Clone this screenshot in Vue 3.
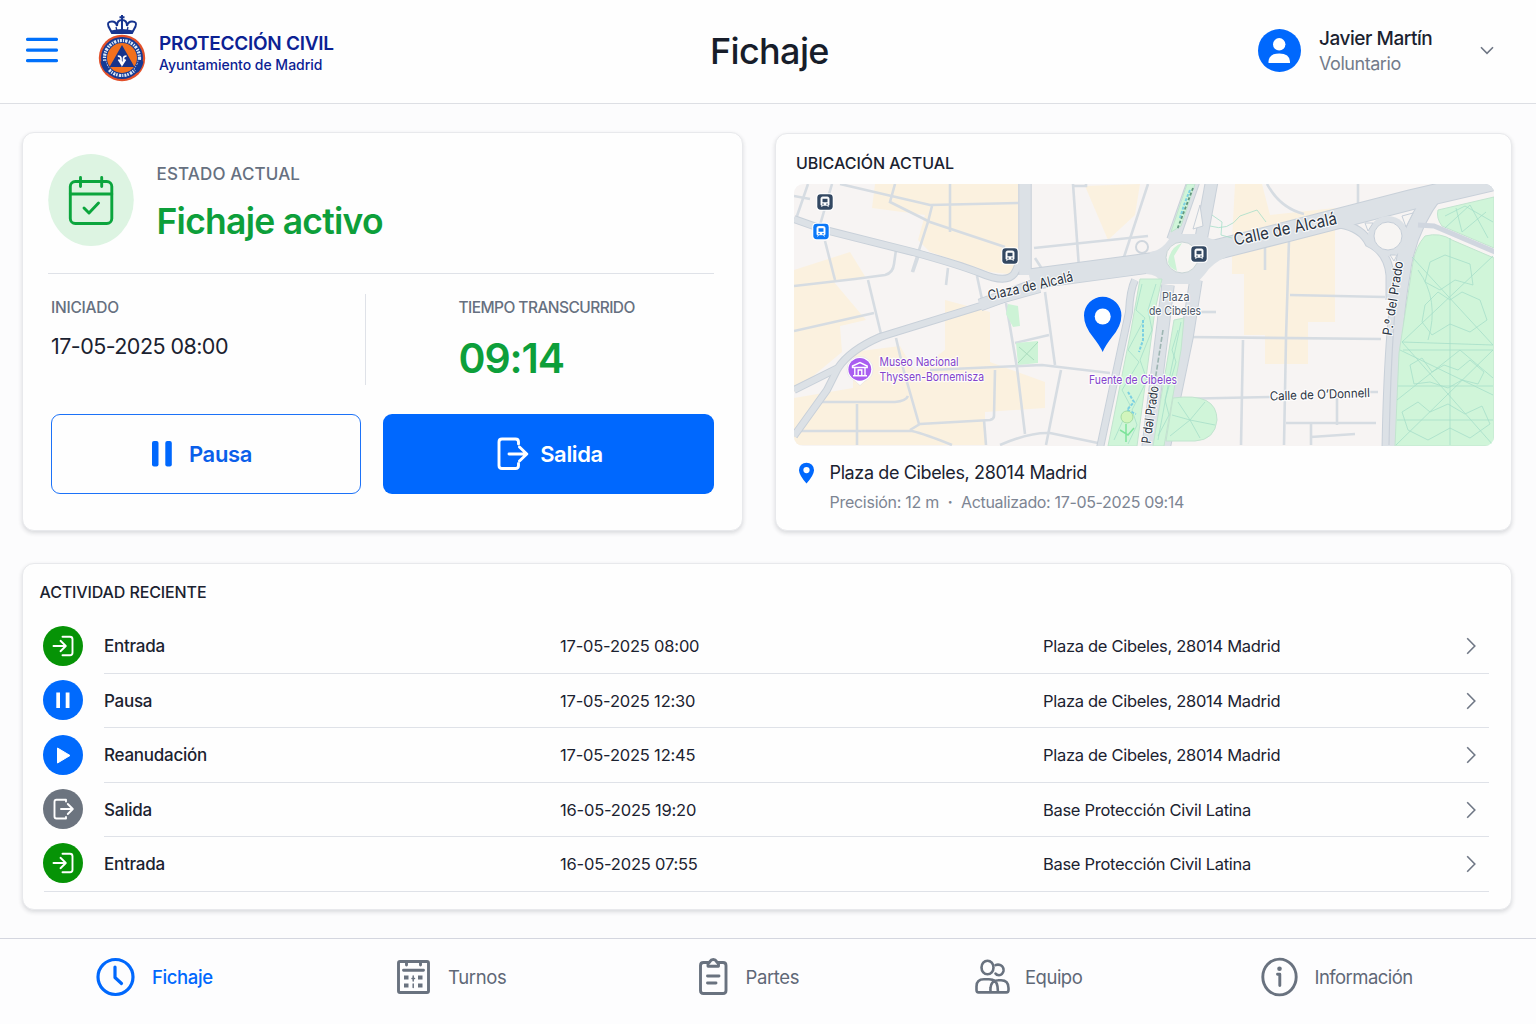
<script setup>
const activity = [
  { type: 'in', label: 'Entrada', time: '17-05-2025 08:00', place: 'Plaza de Cibeles, 28014 Madrid' },
  { type: 'hold', label: 'Pausa', time: '17-05-2025 12:30', place: 'Plaza de Cibeles, 28014 Madrid' },
  { type: 'play', label: 'Reanudación', time: '17-05-2025 12:45', place: 'Plaza de Cibeles, 28014 Madrid' },
  { type: 'out', label: 'Salida', time: '16-05-2025 19:20', place: 'Base Protección Civil Latina' },
  { type: 'in', label: 'Entrada', time: '16-05-2025 07:55', place: 'Base Protección Civil Latina' },
]

// Street geometry, in the map's own coordinate system
const beige = [
  'M875 184H1018V275L990 272L930 252L918 240L925 215L872 208Z',
  'M794 270L850 252L866 278L834 282L866 320L840 326L842 352L794 392Z',
  'M794 398L853 388V352L900 346L915 372L945 350V300L990 312V362L1045 382V408L985 412V445H794Z',
  'M1235 184H1262L1270 215L1335 208V322H1308V364H1265V335H1244V274H1232V240Z',
  'M1085 186L1140 184L1135 215L1108 240Z',
]
const minor = [
  'M840 184L930 205L1018 203', 'M895 184L890 202L930 222L1005 247', 'M950 184V232', 'M932 206L928 222L912 272',
  'M920 252L913 272', 'M808 184L797 216', 'M832 184L820 225', 'M794 196L810 199', 'M825 241L835 280',
  'M794 286L855 279L885 275Q893 273 894 264L896 250', 'M868 280L881 334', 'M794 331L874 313', 'M948 268L946 285',
  'M977 276L983 304', 'M896 338L903 368L919 424', 'M822 402L895 402Q906 401 908 396', 'M857 404V445',
  'M794 431H912Q925 434 952 445M910 430L920 424L990 420Q994 419 994 416L995 370', 'M984 420L986 445',
  'M930 370L1042 365L1110 373', 'M1006 303L1017 368L1025 434', 'M1015 343L1049 335', 'M1045 292L1055 365',
  'M1061 370L1046 445', 'M1000 445Q1030 432 1050 433L1098 443', 'M1073 184L1079 268', 'M1086 184V186H1074',
  'M1148 184L1123 260', 'M1034 248L1148 236', 'M1035 258L1044 272', 'M1267 184Q1280 208 1304 214', 'M1289 240L1286 338L1284 445',
  'M1265 246V270', 'M1290 295L1385 297', 'M1186 337L1381 339', 'M1243 340L1241 445', 'M1173 399L1270 397', 'M1362 392H1378',
  'M1286 423H1376', 'M1337 398V425', 'M1311 424V445M1311 437L1355 434', 'M1200 312H1216', 'M1358 184V206',
]
const mid = [
  'M794 219L825 230L913 252Q960 265 980 273Q1006 284 1014 274Q1020 265 1020 250',
  'M794 390L838 368Q850 350 880 337L1000 300L1040 289', 'M838 368L827 390L794 436',
  'M1135 280Q1130 290 1129 312L1100 448',
]
const wide = [
  'M1025 180V275', 'M1168 285L1148 448', 'M1196 280L1187 337L1164 448', 'M1194 180L1173 240', 'M1212 180L1200 245',
]
const parkPaths = [
  'M1412 257L1493 345', 'M1493 256L1402 342L1493 345', 'M1402 342L1493 445', 'M1493 350L1396 445', 'M1450 238V445',
  'M1403 350H1493', 'M1398 386H1493', 'M1400 350L1493 395', 'M1397 400L1460 350L1493 378', 'M1397 420H1493', 'M1418 270Q1440 300 1428 340',
  'M1430 262L1445 255L1470 264L1473 285L1455 280L1440 290L1425 282Z', 'M1425 305L1438 292L1450 300L1462 292L1480 300L1487 320L1470 332L1450 324L1432 335L1422 322Z',
  'M1410 365L1422 358L1432 372L1444 365L1458 370L1470 360L1484 372L1478 384L1462 380L1448 388L1430 382L1414 384Z',
  'M1402 412L1418 402L1430 412L1448 404L1465 414L1482 406L1490 424L1470 438L1450 428L1428 440L1408 430Z',
  'M1445 216L1465 206L1493 222M1445 228L1470 205L1488 238M1456 208L1462 232L1486 212',
]
const stations = [
  { x: 825, y: 202, fill: '#334862' }, { x: 821, y: 231.5, fill: '#0b78f8' },
  { x: 1010, y: 256, fill: '#334862' }, { x: 1199, y: 254, fill: '#334862' },
]
</script>

<template>
  <div class="app">
    <header class="topbar">
      <svg class="menu" viewBox="0 0 32 26"><path d="M1.6 2.4H30.4M1.6 13.2H30.4M1.6 23.7H30.4" /></svg>
      <svg class="crest" viewBox="0 0 48 68">
        <g fill="none" stroke="#17348f" stroke-width="2">
          <path d="M14 18L10.500 11.500Q8.500 6.500 14 6.500Q18 6.500 19 11Q19 5 24 5Q29 5 29 11Q30 6.500 34 6.500Q39.500 6.500 37.500 11.500L34 18Z" />
          <path d="M24 0V17M21.500 2.200H26.500" />
          <path d="M18 12L19 16M30 12L29 16" stroke-width="1.300" />
          <path d="M13.500 17Q24 14 34.500 17" stroke-width="3" />
        </g>
        <circle cx="24" cy="43" r="23.200" fill="#e2502a" />
        <circle cx="24" cy="43" r="21" fill="#143a94" />
        <circle cx="24" cy="43" r="17.500" fill="none" stroke="#dce8f6" stroke-width="3.200" stroke-dasharray="2 1.100 1.200 1 2.400 1.300 1.500 .9" />
        <path d="M5 46A19 19 0 0 0 10 56M43 46A19 19 0 0 1 38 56" fill="none" stroke="#143a94" stroke-width="5" />
        <circle cx="24" cy="43" r="15" fill="#f2701d" />
        <path d="M24 30L36.500 52H11.500Z" fill="#16338a" />
        <path d="M19.800 41Q23 41 23 43.500V46L24 49.500L25.500 46V43.500Q25.500 41 28.500 41M20.500 44.500L24 50L27.500 44.500" fill="none" stroke="#fff" stroke-width="1.700" />
      </svg>
      <div class="brand">
        <strong>PROTECCIÓN CIVIL</strong>
        <span>Ayuntamiento de Madrid</span>
      </div>
      <h1>Fichaje</h1>
      <div class="user">
        <svg class="avatar" viewBox="0 0 43 43">
          <ellipse cx="21.500" cy="21.500" rx="21.500" ry="21.500" fill="#0068fd" />
          <circle cx="21.200" cy="15.300" r="6.200" fill="#fff" />
          <path d="M10.500 34V32.500Q11 24.500 21.300 24.500Q31.500 24.500 32 32.500V34Z" fill="#fff" />
        </svg>
        <div class="who"><b>Javier Martín</b><span>Voluntario</span></div>
        <svg class="down" viewBox="0 0 14 9"><path d="M1 1.200L7 7.400L13 1.200" /></svg>
      </div>
    </header>

    <main>
      <div class="top">
        <section class="card status">
          <div class="state">
            <svg class="badge" viewBox="0 0 86 92">
              <ellipse cx="43" cy="46" rx="42.800" ry="46" fill="#ddf4e2" />
              <g fill="none" stroke="#0ba53d" stroke-width="2.900" stroke-linecap="round" stroke-linejoin="round">
                <rect x="22.300" y="27.500" width="41.500" height="42" rx="5" />
                <path d="M22.300 40H63.800M32.500 23.500V32.500M53.700 23.500V32.500M36 54L41 59L50.500 49" />
              </g>
            </svg>
            <div class="statetext"><span>ESTADO ACTUAL</span><strong>Fichaje activo</strong></div>
          </div>
          <div class="times">
            <div class="started"><span>INICIADO</span><p>17-05-2025 08:00</p></div>
            <div class="elapsed"><span>TIEMPO TRANSCURRIDO</span><strong>09:14</strong></div>
          </div>
          <div class="actions">
            <button class="pause">
              <svg width="20" height="26" viewBox="0 0 20 26"><rect width="6.500" height="25.500" rx="2" fill="#0068fd" /><rect x="13.300" width="6.500" height="25.500" rx="2" fill="#0068fd" /></svg>
              <span>Pausa</span>
            </button>
            <button class="exit">
              <svg width="32" height="34" viewBox="0 0 32 34" fill="none" stroke="#fff" stroke-width="2.900" stroke-linecap="round" stroke-linejoin="round">
                <path d="M21.500 7V5Q21.500 2 18.500 2H5Q2 2 2 5V28.500Q2 31.500 5 31.500H18.500Q21.500 31.500 21.500 28.500V26.500M12 17H29.500M22.500 10L29.800 17L22.500 24" />
              </svg>
              <span>Salida</span>
            </button>
          </div>
        </section>

        <section class="card location">
          <h2>UBICACIÓN ACTUAL</h2>
          <svg class="map" viewBox="794 184 700 262">
            <rect x="794" y="184" width="700" height="262" fill="#f7f4f3" />
            <path v-for="d in beige" :key="d" :d="d" fill="#fbf1df" />
            <g fill="none" stroke="#d6dce2" stroke-width="2.600"><path v-for="d in minor" :key="d" :d="d" /></g>
            <path d="M1008 304L1018 306L1020 326L1013 327L1006 314ZM1016 343L1038 341L1038 363L1018 365Z" fill="#cdf3d6" />
            <path d="M1018 363L1038 342M1019 347L1034 360" fill="none" stroke="#aadcbe" />
            <circle cx="1142" cy="247" r="6" fill="#f7f4f3" stroke="#cfd6dd" stroke-width="2" />

            <g fill="none" stroke="#c8d0d9">
              <g stroke-width="8"><path v-for="d in mid" :key="d" :d="d" /></g>
              <g stroke-width="13.500"><path v-for="d in wide" :key="d" :d="d" /></g>
              <path d="M980 305L1040 283L1085 272L1150 264" stroke-width="13" />
              <path d="M1030 279L1150 263L1215 250L1290 231L1410 200L1500 179" stroke-width="21" />
              <path d="M1436 192Q1407 230 1402 275Q1392 330 1390 450" stroke-width="17" />
              <path d="M1340 224Q1362 228 1369 243Q1388 252 1390 275V300" stroke-width="9" />
            </g>
            <g fill="none" stroke="#dce1e6">
              <g stroke-width="6"><path v-for="d in mid" :key="d" :d="d" /></g>
              <g stroke-width="11.500"><path v-for="d in wide" :key="d" :d="d" /></g>
              <path d="M980 305L1040 283L1085 272L1150 264" stroke-width="11" />
              <path d="M1030 279L1150 263L1215 250L1290 231L1410 200L1500 179" stroke-width="19" />
              <path d="M1436 192Q1407 230 1402 275Q1392 330 1390 450" stroke-width="15" />
              <path d="M1340 224Q1362 228 1369 243Q1388 252 1390 275V300" stroke-width="7" />
            </g>
            <path d="M1396 300Q1391 350 1389 445" fill="none" stroke="#c9d0d9" stroke-width="1.200" />
            <path d="M1150 252Q1164 250 1172 234H1204Q1207 240 1226 241L1228 256Q1212 263 1205 274L1196 284H1162Q1158 274 1146 274Z" fill="#dce1e6" />
            <ellipse cx="1182" cy="257.500" rx="16" ry="15.500" fill="#f7f5f3" stroke="#c8d4d6" />
            <path d="M1168 262Q1170 247 1182 243L1174 256L1177 271Q1169 268 1168 262Z" fill="#cdf3d6" />
            <path d="M1200 205L1203 226L1193 229Z" fill="#f7f5f3" stroke="#c8d0d9" />
            <circle cx="1388" cy="236" r="20" fill="#dce1e6" />
            <circle cx="1388" cy="236" r="14" fill="#f7f5f3" stroke="#c5ced8" />
            <path d="M1365 223L1373 223L1368 231ZM1402 216L1413 213L1406 227ZM1390 255H1397L1394 261Z" fill="#f7f5f3" stroke="#c5ced8" />

            <!-- Parks and green strips -->
            <g fill="#d0f5d9" stroke="#c2e4cf">
              <path d="M1425 236Q1440 232 1452 240L1494 258V446H1395L1399 353L1413 262Q1416 246 1425 236Z" />
              <path d="M1438 210L1494 197V248L1442 226Q1436 218 1438 210Z" />
              <path d="M1140 279H1162L1155 310L1137 446H1108L1131 330Z" />
              <path d="M1174 320L1184 318L1181 350L1164 446H1153Z" />
              <path d="M1173 398Q1217 392 1217 420Q1215 440 1195 441H1166Z" />
              <path d="M1187 184H1195L1181 226L1171 232Z" />
            </g>
            <path d="M1418 225L1434 226L1500 254" fill="none" stroke="#d0d6df" stroke-width="5" />
            <g fill="none" stroke="#a6dec9" stroke-width="0.800">
              <path v-for="d in parkPaths" :key="d" :d="d" />
              <path d="M1142 284L1136 310L1145 318L1128 350L1139 362L1122 390L1130 405L1114 440M1156 284L1148 310L1152 330L1140 360L1147 380L1132 410L1137 425L1128 444" />
              <path d="M1190 420L1178 402M1190 420L1205 402M1190 420L1215 425M1190 420L1200 438M1190 420L1170 436M1190 420L1172 415" />
              <path d="M1181 322L1170 375L1158 440M1178 330L1172 350L1176 362L1165 400L1169 415L1158 436" />
              <path d="M1212 215L1222 222L1221 235L1232 238M1210 226Q1228 232 1240 216L1257 210L1266 222" />
            </g>
            <path d="M1143 320V340L1139 352M1128 392L1134 402L1127 410L1136 414M1190 190L1184 205L1180 218" fill="none" stroke="#7bd0e2" stroke-width="2" stroke-dasharray="3 1.500" />
            <path d="M1193 188L1177 230" fill="none" stroke="#62977f" stroke-width="1.800" stroke-dasharray="3 2" />
            <path d="M1163 330L1152 400" fill="none" stroke="#9db5b2" stroke-width="1.600" stroke-dasharray="5 2" />
            <circle cx="1127" cy="417" r="6" fill="#d2f5bc" stroke="#a4dda4" />
            <path d="M1120 430L1128 435L1134 428M1126 424V442" fill="none" stroke="#7ee39b" stroke-width="1.500" />

            <!-- Transport stops -->
            <g v-for="s in stations" :key="s.x" :transform="`translate(${s.x} ${s.y})`">
              <rect x="-8.700" y="-8.700" width="17.400" height="17.400" rx="4" fill="#fff" />
              <rect x="-7.700" y="-7.700" width="15.400" height="15.400" rx="3.400" :fill="s.fill" />
              <path d="M-4 3.200V-3.500Q-4 -5 -2.500 -5H2.500Q4 -5 4 -3.500V3.200ZM-3.500 5L-2.500 3.500M3.500 5L2.500 3.500" fill="#fff" stroke="#fff" stroke-width="0.900" />
              <path d="M-2.500 -3.300H2.500V0.300H-2.500ZM-2.700 1.600H-1.300V2.800H-2.700ZM1.300 1.600H2.700V2.800H1.300Z" :fill="s.fill" />
            </g>

            <!-- Museum marker -->
            <path d="M860 385.500L855 381Q847 377 847 369.500A13 13 0 0 1 873 369.500Q873 377 865 381Z" fill="#fff" stroke="#ddd" stroke-width="0.500" />
            <circle cx="859.800" cy="369.300" r="11.400" fill="#a95df0" />
            <path d="M852.500 367.500V366L860 362.500L867.200 366V367.500ZM854.800 368V375.500M865 368V375.500M853 375.700H867M858.200 375V370H861.800V375" fill="none" stroke="#fff" stroke-width="1.400" />

            <path d="M1102.700 352Q1100 346 1093 337Q1084 326 1084 315.500A18.700 18.700 0 0 1 1121.400 315.500Q1121.400 326 1112 337Q1105 346 1102.700 352Z" fill="#0062fb" />
            <circle cx="1102.700" cy="316.500" r="8" fill="#fff" />

            <g class="labels">
              <text x="989" y="300.500" font-size="14" textLength="87" lengthAdjust="spacingAndGlyphs" transform="rotate(-13 989 300)">Claza de Alcalá</text>
              <text x="1235" y="245.500" font-size="17" textLength="105" lengthAdjust="spacingAndGlyphs" transform="rotate(-12 1235 245)">Calle de Alcalá</text>
              <text x="1162" y="301" font-size="12" textLength="27.500" lengthAdjust="spacingAndGlyphs" class="soft">Plaza</text>
              <text x="1149" y="315" font-size="12" textLength="52" lengthAdjust="spacingAndGlyphs" class="soft">de Cibeles</text>
              <text x="1270" y="400.500" font-size="12.500" textLength="100" lengthAdjust="spacingAndGlyphs" transform="rotate(-2 1270 401)">Calle de O’Donnell</text>
              <text x="1391.500" y="336" font-size="13" textLength="75" lengthAdjust="spacingAndGlyphs" transform="rotate(-81 1391.500 336)">P.º del Prado</text>
              <text x="1150.500" y="444" font-size="13" textLength="58" lengthAdjust="spacingAndGlyphs" transform="rotate(-82 1150.500 444)">P dəl Prado</text>
              <g class="poi">
                <text x="879.500" y="366" font-size="12" textLength="79" lengthAdjust="spacingAndGlyphs">Museo Nacional</text>
                <text x="879.500" y="380.500" font-size="12" textLength="104.500" lengthAdjust="spacingAndGlyphs">Thyssen-Bornemisza</text>
                <text x="1089" y="383.500" font-size="12" textLength="88" lengthAdjust="spacingAndGlyphs">Fuente de Cibeles</text>
              </g>
            </g>
          </svg>
          <div class="address">
            <svg viewBox="0 0 16 21"><path fill-rule="evenodd" d="M8 20.500Q1 12.500 0.800 7.800A7.200 7.200 0 0 1 15.200 7.800Q15 12.500 8 20.500ZM8 4.700A3 3 0 1 0 8 10.700A3 3 0 1 0 8 4.700Z" fill="#0068fd" /></svg>
            <div>
              <p>Plaza de Cibeles, 28014 Madrid</p>
              <div class="meta"><span class="prec">Precisión: 12 m</span><i>·</i><span>Actualizado: 17-05-2025 09:14</span></div>
            </div>
          </div>
        </section>
      </div>

      <section class="card recent">
        <h2>ACTIVIDAD RECIENTE</h2>
        <ul>
          <li v-for="(a, i) in activity" :key="i">
            <svg class="dot" :class="a.type" viewBox="0 0 40 40">
              <circle cx="20" cy="20" r="20" />
              <g v-if="a.type === 'in'" class="line"><path d="M19.500 10.800H27Q29.500 10.800 29.500 13.300V26.700Q29.500 29.200 27 29.200H19.500M10.500 20H22.500M17.500 14.800L22.800 20L17.500 25.200" /></g>
              <g v-else-if="a.type === 'out'" class="line"><path d="M23 12.500V10.800H13.500Q11.500 10.800 11.500 12.800V27.500Q11.500 29.500 13.500 29.500H23V28M18 20H29.500M24.800 15L29.800 20L24.800 25" /></g>
              <path v-else-if="a.type === 'hold'" d="M13.300 12.500H17V28H13.300ZM22.700 12.500H26.500V28H22.700Z" fill="#fff" />
              <path v-else d="M14.500 13V28L27 20.500Z" fill="#fff" stroke="#fff" stroke-linejoin="round" />
            </svg>
            <div class="row">
              <b>{{ a.label }}</b><time>{{ a.time }}</time><span>{{ a.place }}</span>
              <svg class="go" viewBox="0 0 10 18"><path d="M1.200 1.200L8.800 9L1.200 16.800" /></svg>
            </div>
          </li>
        </ul>
      </section>
    </main>

    <nav>
      <a class="on">
        <svg width="39" height="40" viewBox="0 0 39 40" stroke-width="3.200"><circle cx="19.500" cy="20" r="17.500" /><path d="M19 10V20.500L25.500 26.500" /></svg>
        <span>Fichaje</span>
      </a>
      <a>
        <svg width="33" height="34" viewBox="0 0 33 34" stroke-width="2.900">
          <rect x="1.500" y="1.500" width="30" height="31" rx="1.500" />
          <path d="M6.500 10.300H26.500M9.500 3V5M23.500 3V5" />
          <path d="M7 15.500H11.500V19.500H7ZM21 15.500H25.500V19.500H21ZM7 23.500H11.500V27.500H7ZM21 23.500H25.500V27.500H21Z" fill="#69727f" stroke="none" /><path d="M15 18.500H17.500M16.200 16V21M16.200 24V27.500" stroke-width="1.500" />
        </svg>
        <span>Turnos</span>
      </a>
      <a class="parts">
        <svg width="29" height="37" viewBox="0 0 29 37" stroke-width="2.900">
          <path d="M9 4.500H4.500Q1.500 4.500 1.500 7.500V32.500Q1.500 35.500 4.500 35.500H24Q27 35.500 27 32.500V7.500Q27 4.500 24 4.500H19.500" />
          <path d="M9 8.300V5.500Q10.500 4.500 11 3.500Q12 1.500 14.300 1.500Q16.500 1.500 17.500 3.500Q18 4.500 19.500 5.500V8.300ZM8.500 18H20M8.500 25H17" />
        </svg>
        <span>Partes</span>
      </a>
      <a class="team">
        <svg width="35" height="35" viewBox="0 0 35 35" stroke-width="2.600">
          <ellipse cx="12.500" cy="8.500" rx="6" ry="6.800" />
          <path d="M20.500 6.200Q23 5 25.500 6.200Q29 8 28.500 12Q27.500 16 24 16.200Q21.500 16.200 20.500 14.500M3.500 33.400Q1.500 33.400 1.500 31V27.500Q1.500 20.300 9 20.300H14Q21.500 20.300 22.500 27.500L23 33.400ZM23.500 21.300H26Q33.400 21.300 33.500 29V31Q33.500 33.400 31.500 33.400H17Q15 33.400 15.500 29Q16 22 22 21.500" />
        </svg>
        <span>Equipo</span>
      </a>
      <a class="info">
        <svg width="37" height="40" viewBox="0 0 37 40" stroke-width="2.900">
          <ellipse cx="18.500" cy="20" rx="16.700" ry="17.900" /><path d="M16.500 17.300H18.800V28.500" /><circle cx="18.500" cy="11.800" r="2.300" fill="#69727f" stroke="none" />
        </svg>
        <span>Información</span>
      </a>
    </nav>
  </div>
</template>

<style>
body { margin: 0; background: #fdfdfd; }
</style>

<style scoped>
* { box-sizing: border-box; margin: 0; padding: 0; }
.app { width: 1536px; height: 1024px; display: flex; flex-direction: column; overflow: hidden; font-family: Inter, "Liberation Sans", sans-serif; color: #1b2230; background: #fcfcfd; white-space: nowrap; }
svg { flex: none; display: block; }

.topbar { height: 104px; flex: none; display: grid; grid-template-columns: 72px 61px 552px 1fr auto; align-items: center; padding: 0 42px 3px 26px; background: #fefefe; border-bottom: 1px solid #dddfe4; }
.menu { width: 32px; height: 26px; fill: none; stroke: #0070fb; stroke-width: 3.3; stroke-linecap: round; }
.crest { width: 48px; height: 68px; margin-top: -2px; }
.brand { display: flex; flex-direction: column; color: #0b2193; padding-top: 8px; }
.brand strong { font-size: 19px; font-weight: 580; line-height: 22px; letter-spacing: -.25px; }
.brand span { font-size: 14px; font-weight: 470; line-height: 20px; letter-spacing: -.02px; }
h1 { font-size: 36px; font-weight: 550; letter-spacing: -.65px; line-height: 44px; padding-top: 2px; margin-left: -1px; color: #171d2a; }
.user { display: flex; align-items: center; }
.avatar { width: 43px; height: 43px; }
.who { display: flex; flex-direction: column; margin-left: 18px; width: 161px; padding-top: 3px; }
.who b { font-size: 19px; font-weight: 480; letter-spacing: -.45px; line-height: 24px; }
.who span { font-size: 18px; letter-spacing: -.45px; line-height: 25px; color: #737b8a; }
.down { width: 14px; height: 9px; fill: none; stroke: #6e7684; stroke-width: 1.6; }

main { flex: 1; padding: 28px 24px 0 22px; }
.top { display: flex; justify-content: space-between; align-items: flex-end; }
.card { background: #fefefe; border: 1px solid #e8e9ec; border-radius: 12px; box-shadow: 0 2px 4px rgba(30, 35, 50, .16); }
h2 { font-size: 16px; font-weight: 490; line-height: 20px; letter-spacing: -.03px; }

.status { width: 721px; height: 399px; padding: 21px 28px 0 25px; }
.state { display: flex; height: 120px; border-bottom: 1px solid #dfe2e8; }
.badge { width: 86px; height: 92px; }
.statetext { display: flex; flex-direction: column; margin-left: 22.5px; padding-top: 8px; }
.statetext span { font-size: 17px; font-weight: 460; letter-spacing: .15px; line-height: 24px; color: #667080; }
.statetext strong { font-size: 35.5px; font-weight: 560; letter-spacing: -.75px; line-height: 48px; margin-top: 12px; color: #0d9f3a; }
.times { display: flex; height: 91px; margin: 20px 0 0 3px; }
.times span { display: block; font-size: 15.5px; font-weight: 460; letter-spacing: -.25px; line-height: 20px; padding-top: 3.500px; height: 28px; color: #667080; }
.started { width: 315px; border-right: 1px solid #dfe2e8; }
.started p { font-size: 21.5px; letter-spacing: -.55px; line-height: 30px; margin-top: 9px; }
.elapsed { padding-left: 92.5px; }
.times .elapsed span { letter-spacing: -.56px; }
.elapsed strong { display: block; font-size: 41px; font-weight: 570; letter-spacing: -1.1px; line-height: 50px; margin-top: 10.5px; color: #0d9f3a; }
.actions { display: flex; gap: 22px; margin: 28.5px 0 0 3px; }
button { height: 80px; display: flex; align-items: center; justify-content: center; border-radius: 9px; font: 570 22px Inter, sans-serif; letter-spacing: -.35px; }
.pause { width: 310px; gap: 17px; padding-right: 8px; border: 1.5px solid #1c72f8; background: #fefefe; color: #0a5fea; }
.exit { width: 331px; gap: 11px; border: 0; background: #0068fe; color: #fff; padding-left: 3px; }

.location { width: 737px; height: 398px; padding: 19px 18px 0; }
.location h2 { margin-left: 2px; }
.map { width: 700px; height: 262px; margin-top: 11px; border-radius: 9px; }
.labels { font-family: Inter, sans-serif; font-weight: 430; fill: #2b3442; stroke: rgba(255, 255, 255, .85); stroke-width: 2.4px; stroke-linejoin: round; paint-order: stroke; }
.soft { fill: #4d5867; }
.poi { fill: #8343cb; }
.address { display: flex; margin: 14px 0 0 4px; }
.address svg { width: 17px; height: 22px; margin-top: 2px; }
.address > div { margin-left: 14.5px; }
.address p { font-size: 18px; letter-spacing: -.37px; line-height: 26px; }
.meta { display: flex; font-size: 16px; letter-spacing: -.34px; line-height: 24px; margin-top: 4px; color: #7d8593; }
.meta .prec { letter-spacing: -.27px; }
.meta i { width: 22px; text-align: center; font-style: normal; font-weight: 700; }

.recent { height: 347px; margin-top: 32px; padding: 18px 22px 0 21px; }
.recent h2 { margin-left: -4.5px; letter-spacing: -.12px; }
ul { list-style: none; margin-top: 17px; }
li { display: flex; height: 54.5px; align-items: center; }
li:last-child { border-bottom: 1px solid #dfe2e8; }
.dot { width: 40px; height: 40px; margin: -1px 21px 0 -1px; }
.in circle { fill: #069306; }
.hold circle, .play circle { fill: #006afd; }
.out circle { fill: #6c747f; }
.line { fill: none; stroke: #fff; stroke-width: 1.9; stroke-linecap: round; stroke-linejoin: round; }
.row { flex: 1; height: 100%; display: grid; grid-template-columns: 456px 483px 1fr 10px; align-items: center; border-bottom: 1px solid #dfe2e8; font-size: 16.5px; padding: 1px 13px 0 0; }
li:last-child .row { border: 0; padding-bottom: 1px; }
.row b { font-size: 17px; font-weight: 470; letter-spacing: -.25px; }
.row time { letter-spacing: -.2px; }
.row span { letter-spacing: -.3px; }
.go { width: 10px; height: 18px; fill: none; stroke: #6f7785; stroke-width: 1.6; }

nav { height: 86px; flex: none; display: grid; grid-template-columns: 301px 301.5px 276px 286px 1fr; align-items: center; padding: 0 0 10px 96px; border-top: 1px solid #d4d6df; background: #fdfdfe; }
nav a { display: flex; align-items: center; gap: 18px; font-size: 18.5px; font-weight: 430; letter-spacing: -.38px; color: #5f6877; }
nav svg { fill: none; stroke: #69727f; stroke-linecap: round; stroke-linejoin: round; }
nav .on { gap: 17px; color: #0068fd; font-weight: 480; }
nav .on svg { stroke: #0068fd; }
nav .team { gap: 15.5px; letter-spacing: -.5px; }
nav .info { gap: 17px; letter-spacing: -.55px; }
</style>
